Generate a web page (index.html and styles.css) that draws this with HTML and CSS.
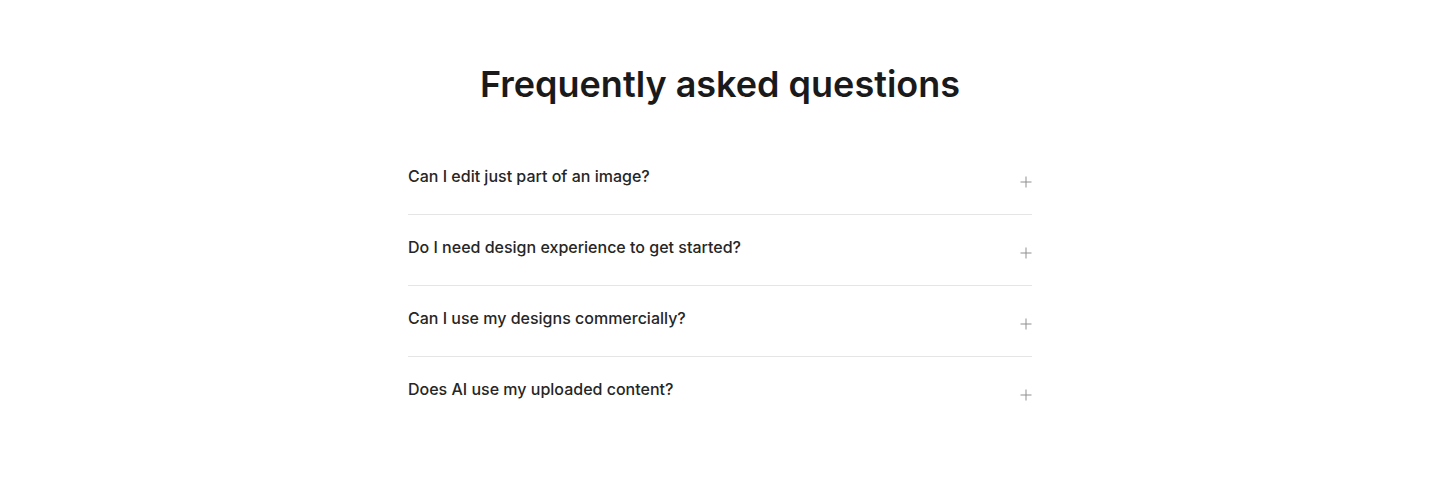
FILE: index.html
```html
<!DOCTYPE html>
<html lang="en">
<head>
<meta charset="utf-8">
<title>FAQ</title>
<link rel="stylesheet" href="styles.css">
</head>
<body>
<section class="faq">
  <h2 class="faq-title">Frequently asked questions</h2>
  <div class="faq-list">
    <div class="faq-item">
      <span class="faq-q">Can I edit just part of an image?</span>
      <svg class="faq-icon" viewBox="0 0 12 12" width="12" height="12"><path d="M6 0.5v11M0.5 6h11" stroke="currentColor" stroke-width="1" fill="none"/></svg>
    </div>
    <div class="faq-item">
      <span class="faq-q">Do I need design experience to get started?</span>
      <svg class="faq-icon" viewBox="0 0 12 12" width="12" height="12"><path d="M6 0.5v11M0.5 6h11" stroke="currentColor" stroke-width="1" fill="none"/></svg>
    </div>
    <div class="faq-item">
      <span class="faq-q">Can I use my designs commercially?</span>
      <svg class="faq-icon" viewBox="0 0 12 12" width="12" height="12"><path d="M6 0.5v11M0.5 6h11" stroke="currentColor" stroke-width="1" fill="none"/></svg>
    </div>
    <div class="faq-item">
      <span class="faq-q">Does AI use my uploaded content?</span>
      <svg class="faq-icon" viewBox="0 0 12 12" width="12" height="12"><path d="M6 0.5v11M0.5 6h11" stroke="currentColor" stroke-width="1" fill="none"/></svg>
    </div>
  </div>
</section>
</body>
</html>
```
FILE: styles.css
```css
html, body {
  margin: 0;
  padding: 0;
  background: #ffffff;
}
body {
  font-family: Inter, "Noto Sans", sans-serif;
  color: #1a1a1a;
}
.faq {
  padding-top: 64px;
  display: flex;
  flex-direction: column;
  align-items: center;
}
.faq-title {
  margin: 0;
  font-size: 36px;
  line-height: 40px;
  font-weight: 600;
  color: #1a1a1a;
}
.faq-list {
  width: 624px;
  margin-top: 40px;
}
.faq-item {
  display: flex;
  justify-content: space-between;
  align-items: flex-start;
  padding: 20px 0 26px;
  border-bottom: 1px solid #e5e5e5;
}
.faq-item:last-child {
  border-bottom: none;
}
.faq-q {
  font-size: 16px;
  line-height: 24px;
  font-weight: 500;
  color: #262626;
}
.faq-icon {
  display: block;
  margin-top: 12px;
  margin-right: 0;
  color: #8f8f8f;
}
```
